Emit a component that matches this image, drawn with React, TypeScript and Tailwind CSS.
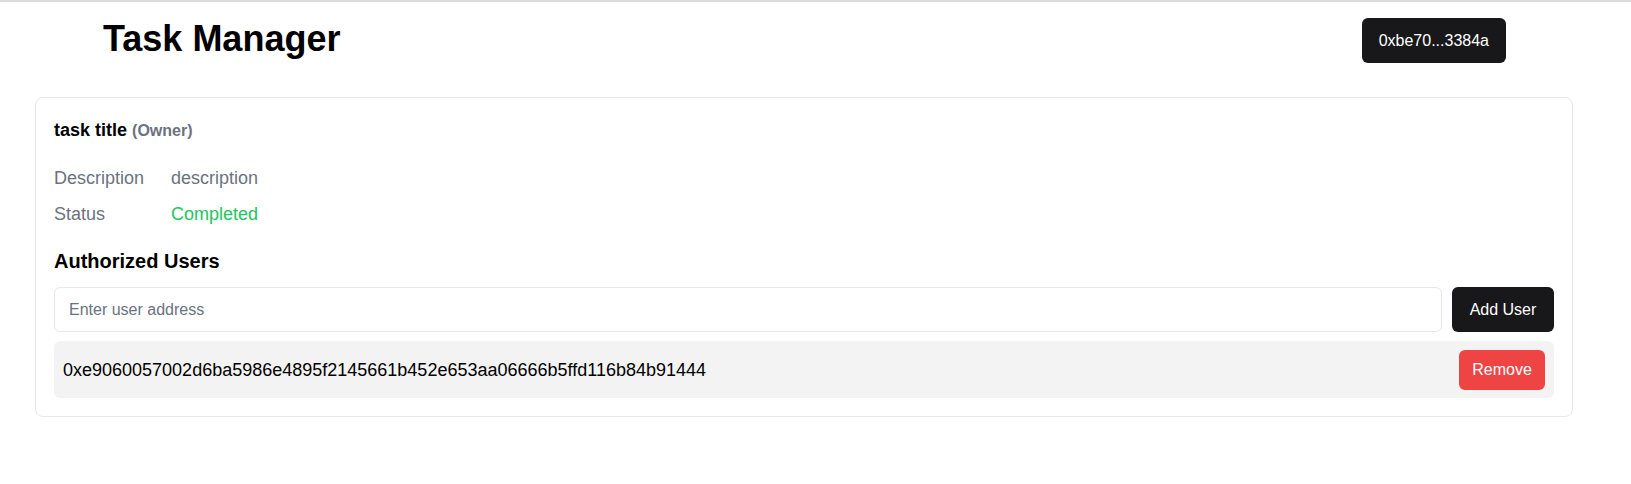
import { useState } from "react";

type AuthorizedUser = {
  address: string;
};

const initialUsers: AuthorizedUser[] = [
  { address: "0xe9060057002d6ba5986e4895f2145661b452e653aa06666b5ffd116b84b91444" },
];

export default function App() {
  const [users, setUsers] = useState<AuthorizedUser[]>(initialUsers);
  const [newAddress, setNewAddress] = useState("");

  function addUser() {
    if (!newAddress.trim()) return;
    setUsers([...users, { address: newAddress.trim() }]);
    setNewAddress("");
  }

  function removeUser(address: string) {
    setUsers(users.filter((u) => u.address !== address));
  }

  return (
    <div className="min-h-[484px] bg-white border-t-2 border-[#dcdcdc] font-['Liberation_Sans',Arial,sans-serif] text-black">
      <div className="ml-[35px] w-[1538px]">
        {/* header */}
        <header className="flex items-start justify-between pl-[68px] pr-[67px] pt-4">
          <h1 className="mt-[1px] text-4xl font-bold leading-10">Task Manager</h1>
          <button className="h-[45px] px-[17px] rounded-md bg-[#18181b] text-white text-base">
            0xbe70...3384a
          </button>
        </header>

        {/* task card */}
        <div className="mt-[34px] rounded-lg border border-[#e5e7eb] p-[18px]">
          <div className="text-lg font-bold leading-7">
            task title{" "}
            <span className="text-base text-[#6b7280]">(Owner)</span>
          </div>

          <div className="mt-5 space-y-2 text-lg leading-7">
            <div className="flex">
              <span className="w-[117px] text-[#6b7280]">Description</span>
              <span className="text-[#6b7280]">description</span>
            </div>
            <div className="flex">
              <span className="w-[117px] text-[#6b7280]">Status</span>
              <span className="text-[#22c55e]">Completed</span>
            </div>
          </div>

          <h2 className="mt-[19px] text-xl font-bold leading-7">Authorized Users</h2>

          <div className="mt-3 flex gap-2.5">
            <input
              value={newAddress}
              onChange={(e) => setNewAddress(e.target.value)}
              placeholder="Enter user address"
              className="h-[45px] flex-1 rounded-md border border-[#e5e7eb] px-[14px] text-base placeholder:text-[#6b7280] focus:outline-none"
            />
            <button
              onClick={addUser}
              className="h-[45px] w-[102px] rounded-md bg-[#18181b] text-white text-base"
            >
              Add User
            </button>
          </div>

          <div className="mt-[9px] space-y-2">
            {users.map((u) => (
              <div
                key={u.address}
                className="flex h-[57px] items-center justify-between rounded-md bg-[#f3f3f3] pl-[9px] pr-[9px]"
              >
                <span className="text-lg">{u.address}</span>
                <button
                  onClick={() => removeUser(u.address)}
                  className="h-[40px] w-[86px] rounded-md bg-[#ef4444] text-white text-base"
                >
                  Remove
                </button>
              </div>
            ))}
          </div>
        </div>
      </div>
    </div>
  );
}
